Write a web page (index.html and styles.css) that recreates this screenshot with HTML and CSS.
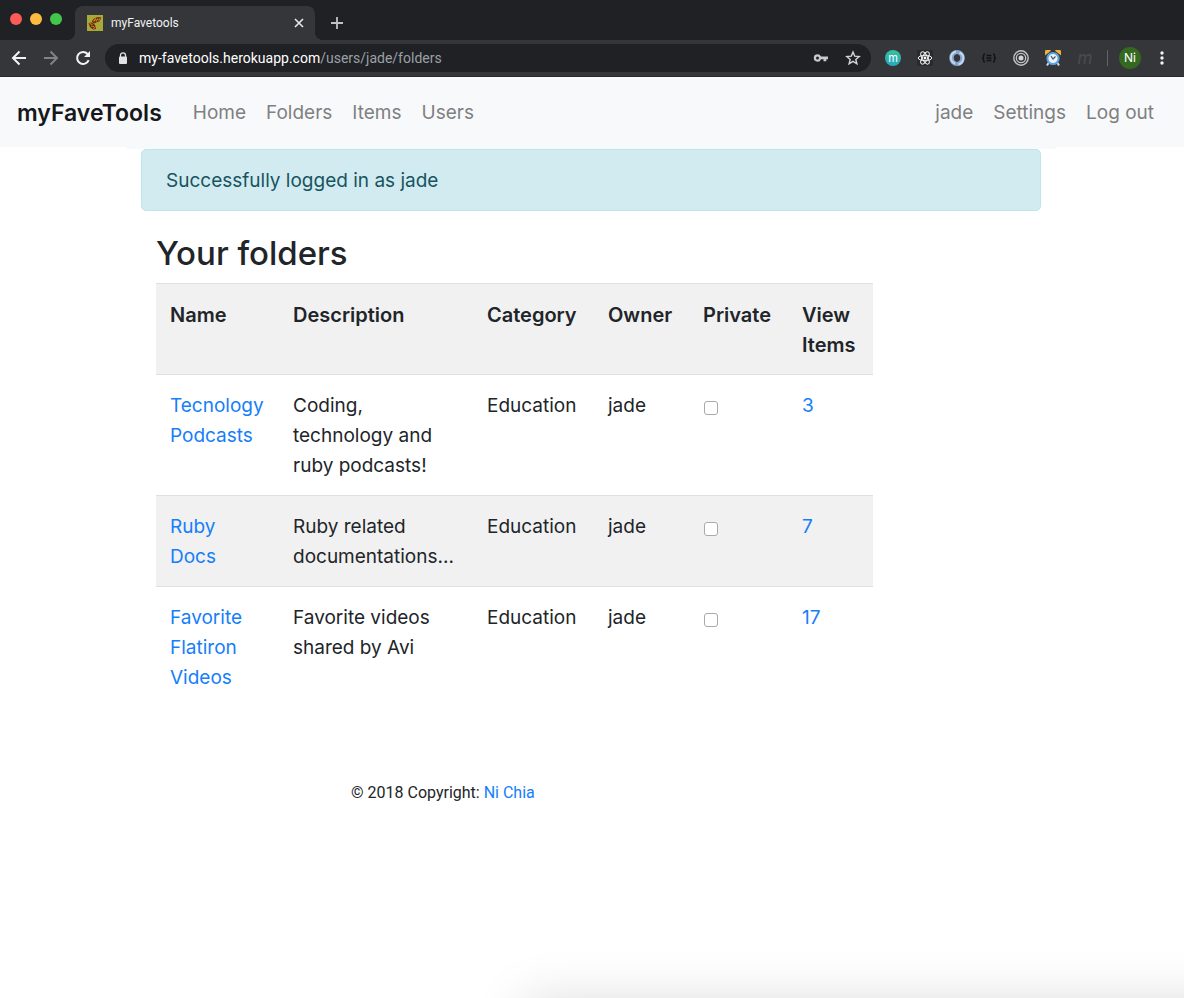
FILE: index.html
```
<!DOCTYPE html>
<html lang="en">
<head>
<meta charset="utf-8">
<meta name="viewport" content="width=device-width, initial-scale=1">
<title>myFavetools</title>
<link rel="stylesheet" href="styles.css">
</head>
<body>
<div class="window">
  <header class="chrome">
    <div class="tabstrip">
      <div class="lights">
        <button class="light red" aria-label="Close window"></button>
        <button class="light yellow" aria-label="Minimize window"></button>
        <button class="light green" aria-label="Zoom window"></button>
      </div>
      <div class="tab">
        <svg class="favicon" viewBox="0 0 16 16" aria-hidden="true">
          <rect width="16" height="16" fill="#a9a93a"/>
          <path d="M5 7C5.500 4 9 1.800 14 2.500L13.500 4.500L12 6.500L9 7.500L7 8.500Z" fill="#5a2a10"/>
          <path d="M1.500 8L5 7.500L8 10L9 14L6 14.500L3 12Z" fill="#5a2a10"/>
          <path d="M6.500 6.500L9 3.500M9 6.500L11 3.500M11.500 5.500L13 3.500M2.500 8.500L5.500 9.500M4 11L7 11.500M6 13.500L8 12.500" stroke="#ea7a20" stroke-width="1.200" fill="none"/>
        </svg>
        <span class="tab-title">myFavetools</span>
        <button class="icon-btn tab-close" aria-label="Close tab"><svg width="10" height="10" viewBox="0 0 10 10"><path d="M1 1L9 9M9 1L1 9" stroke="#e8eaed" stroke-width="1.600"/></svg></button>
      </div>
      <button class="icon-btn new-tab" aria-label="New tab"><svg width="12" height="12" viewBox="0 0 12 12"><path d="M6 0V12M0 6H12" stroke="#c0c2c5" stroke-width="1.800"/></svg></button>
    </div>
    <div class="toolbar">
      <button class="icon-btn" aria-label="Back"><svg width="16" height="16" viewBox="0 0 16 16"><path d="M15 8H2.500M8.500 1.500L2 8L8.500 14.500" stroke="#f1f3f4" stroke-width="2" fill="none"/></svg></button>
      <button class="icon-btn" aria-label="Forward"><svg width="16" height="16" viewBox="0 0 16 16"><path d="M1 8H13.500M7.500 1.500L14 8L7.500 14.500" stroke="#808286" stroke-width="2" fill="none"/></svg></button>
      <button class="icon-btn" aria-label="Reload"><svg width="16" height="16" viewBox="0 0 16 16"><path d="M13.700 10.200A6 6 0 1 1 12.600 4L14 5.500" stroke="#f1f3f4" stroke-width="2" fill="none"/><path d="M15 1V7H9Z" fill="#f1f3f4"/></svg></button>
      <div class="omnibox">
        <svg width="10" height="13" viewBox="0 0 10 13" aria-hidden="true"><path d="M2.500 5.500V3.300A2.500 2.500 0 0 1 7.500 3.300V5.500" stroke="#e0e2e5" stroke-width="1.300" fill="none"/><rect x="1" y="4.500" width="8" height="7.500" rx="1" fill="#e0e2e5"/></svg>
        <span class="url">my-favetools.herokuapp.com<span class="path">/users/jade/folders</span></span>
        <button class="icon-btn" aria-label="Passwords"><svg width="16" height="16" viewBox="0 0 16 16"><path d="M4.500 4.300A3.700 3.700 0 1 0 8 9.200H10.500V11.300H13.300V9.200H15V6.600H8A3.700 3.700 0 0 0 4.500 4.300ZM4.500 6.500A1.500 1.500 0 1 1 4.500 9.500A1.500 1.500 0 0 1 4.500 6.500Z" fill="#c8cacd" fill-rule="evenodd"/></svg></button>
        <button class="icon-btn" aria-label="Bookmark"><svg width="16" height="16" viewBox="0 0 16 16"><path d="M8 2L9.700 6.100L14.200 6.500L10.800 9.400L11.900 13.800L8 11.400L4.100 13.800L5.200 9.400L1.800 6.500L6.300 6.100Z" stroke="#d3d5d8" stroke-width="1.400" fill="none"/></svg></button>
      </div>
      <div class="extensions">
        <button class="icon-btn ext-m" aria-label="Extension m">m</button>
        <button class="icon-btn" aria-label="React tools"><svg width="16" height="16" viewBox="0 0 16 16"><rect width="16" height="16" rx="1" fill="#292a2d"/><g stroke="#f4f4f4" stroke-width="1" fill="none"><ellipse cx="8" cy="8" rx="6.800" ry="2.700"/><ellipse cx="8" cy="8" rx="6.800" ry="2.700" transform="rotate(60 8 8)"/><ellipse cx="8" cy="8" rx="6.800" ry="2.700" transform="rotate(120 8 8)"/></g><circle cx="8" cy="8" r="1.400" fill="#fff"/></svg></button>
        <button class="icon-btn" aria-label="JSON tools"><svg width="16" height="16" viewBox="0 0 16 16"><ellipse cx="8" cy="8" rx="5.500" ry="5.700" stroke="#84a5ce" stroke-width="4.600" fill="none"/><path d="M7 1.500C1 3 0 11 6 13.500M9.500 14.500C15.500 12.500 16 5 10.500 2.500" stroke="#c4d7ec" stroke-width="2" fill="none"/><ellipse cx="8" cy="8" rx="2.500" ry="3.700" fill="#35363a"/></svg></button>
        <button class="icon-btn" aria-label="Code formatter"><svg width="16" height="16" viewBox="0 0 16 16"><path d="M4 4Q2.500 4 2.500 5.500V7L1.500 8L2.500 9V10.500Q2.500 12 4 12M12 4Q13.500 4 13.500 5.500V7L14.500 8L13.500 9V10.500Q13.500 12 12 12M5.500 5.500H10.500M5.500 8H10.500M5.500 10.500H10.500" stroke="#121315" stroke-width="1.400" fill="none"/></svg></button>
        <button class="icon-btn" aria-label="Focus target"><svg width="16" height="16" viewBox="0 0 16 16"><g fill="none" stroke="#c4c4c4"><circle cx="8" cy="8" r="7.200" stroke-width="1.400"/><circle cx="8" cy="8" r="4.700" stroke-width="1.300"/></g><circle cx="8" cy="8" r="2.500" fill="#d4d4d4"/></svg></button>
        <button class="icon-btn" aria-label="Alarm clock"><svg width="16" height="16" viewBox="0 0 16 16"><path d="M3.500 13L2 15.500M12.500 13L14 15.500" stroke="#d1d9e1" stroke-width="2"/><path d="M0 5.500A3.600 3.600 0 0 1 6 .8ZM16 5.500A3.600 3.600 0 0 0 10 .8Z" fill="#edb13c"/><circle cx="8" cy="8.500" r="5.600" fill="#e9f3fb" stroke="#5ea2dc" stroke-width="2"/><path d="M6 6L8 9L10.500 6.500" stroke="#4a5968" stroke-width="1.200" fill="none"/></svg></button>
        <button class="icon-btn ext-script" aria-label="Extension">m</button>
      </div>
      <span class="divider"></span>
      <button class="icon-btn avatar" aria-label="Profile Ni">Ni</button>
      <button class="icon-btn menu" aria-label="Menu"><svg width="10" height="16" viewBox="0 0 10 16"><g fill="#f1f3f4"><circle cx="5" cy="3" r="1.700"/><circle cx="5" cy="8" r="1.700"/><circle cx="5" cy="13" r="1.700"/></g></svg></button>
    </div>
  </header>

  <nav class="navbar">
    <a class="brand" href="#">myFaveTools</a>
    <div class="links"><a href="#">Home</a><a href="#">Folders</a><a href="#">Items</a><a href="#">Users</a></div>
    <div class="links account"><a href="#">jade</a><a href="#">Settings</a><a href="#">Log out</a></div>
  </nav>

  <main class="page">
    <div class="notice"><div class="alert" role="status">Successfully logged in as jade</div></div>
    <section class="content">
      <h1>Your folders</h1>
      <table class="folders">
        <colgroup><col class="c-name"><col class="c-desc"><col class="c-cat"><col class="c-owner"><col class="c-private"><col class="c-view"></colgroup>
        <thead>
          <tr><th>Name</th><th>Description</th><th>Category</th><th>Owner</th><th>Private</th><th>View Items</th></tr>
        </thead>
        <tbody>
          <tr><td><a href="#">Tecnology Podcasts</a></td><td>Coding,<br>technology and ruby podcasts!</td><td>Education</td><td>jade</td><td><input type="checkbox" aria-label="Tecnology Podcasts private"></td><td><a href="#">3</a></td></tr>
          <tr><td><a href="#">Ruby<br>Docs</a></td><td>Ruby related documentations...</td><td>Education</td><td>jade</td><td><input type="checkbox" aria-label="Ruby Docs private"></td><td><a href="#">7</a></td></tr>
          <tr><td><a href="#">Favorite Flatiron Videos</a></td><td>Favorite videos shared by Avi</td><td>Education</td><td>jade</td><td><input type="checkbox" aria-label="Favorite Flatiron Videos private"></td><td><a href="#">17</a></td></tr>
        </tbody>
      </table>
      <footer class="footer">© 2018 Copyright: <a href="#">Ni Chia</a></footer>
    </section>
  </main>
  <div class="shade"></div>
</div>
</body>
</html>
```
FILE: styles.css
```
* { box-sizing: border-box; }
body {
  margin: 0;
  background: #fff;
  color: #212529;
  font: 19px/30px Inter, "Liberation Sans", sans-serif;
}
a { color: #157efb; text-decoration: none; }
svg { display: block; }

.window { position: relative; min-height: 100vh; overflow: hidden; }

/* browser frame */
.chrome { background: #202124; color: #f1f3f4; }
.tabstrip { display: flex; height: 40px; padding-top: 6px; }
.lights { display: flex; gap: 8px; width: 75px; padding: 7px 0 0 10px; }
.light { width: 12px; height: 12px; padding: 0; border: 0; border-radius: 50%; }
.red { background: #fc5b57; }
.yellow { background: #fdbc40; }
.green { background: #41c84b; }
.tab {
  position: relative;
  display: flex;
  align-items: center;
  width: 240px;
  padding: 0 11px 0 12px;
  border-radius: 8px 8px 0 0;
  background: #35363a;
}
.tab::before, .tab::after {
  content: "";
  position: absolute;
  bottom: 0;
  width: 8px;
  height: 8px;
}
.tab::before { right: 100%; background: radial-gradient(circle at 0 0, #202124 8px, #35363a 8px); }
.tab::after { left: 100%; background: radial-gradient(circle at 100% 0, #202124 8px, #35363a 8px); }
.favicon { width: 16px; height: 16px; }
.tab-title { flex: 1; padding-left: 8px; font: 12px/16px Roboto, sans-serif; }
.icon-btn {
  display: flex;
  flex: none;
  align-items: center;
  justify-content: center;
  padding: 0;
  border: 0;
  background: none;
  color: #fff;
}
.new-tab { padding-left: 16px; }
.toolbar {
  display: flex;
  align-items: center;
  gap: 16px;
  height: 37px;
  padding: 0 17px 0 11px;
  border-bottom: 1px solid #28292c;
  background: #35363a;
}
.omnibox {
  display: flex;
  flex: 1;
  align-items: center;
  gap: 16px;
  height: 28px;
  margin: 0 -2px;
  padding: 0 10px 0 13px;
  border-radius: 14px;
  background: #202124;
}
.url { flex: 1; margin-left: -5px; font: 14px/20px Roboto, sans-serif; color: #fff; }
.path { color: #9aa0a6; }
.extensions { display: flex; align-items: center; gap: 16px; }
.ext-m {
  width: 16px;
  height: 16px;
  border-radius: 50%;
  background: linear-gradient(#35c0a0, #27a9bb);
  font: 11px/14px Inter, sans-serif;
}
.ext-script { width: 16px; height: 16px; color: #4b4c50; font: italic 17px/16px Inter, sans-serif; }
.divider { width: 1px; height: 16px; margin: 0 -5px 0 -2px; background: #626367; }
.avatar {
  width: 22px;
  height: 22px;
  border-radius: 50%;
  background: #34691f;
  font: 12px/22px Inter, sans-serif;
}

/* site navigation */
.navbar {
  display: flex;
  align-items: center;
  min-height: 70px;
  padding: 2px 30px 0 17px;
  background: #f8f9fb;
}
.brand { margin-right: 31px; color: #16181b; font-size: 23px; font-weight: 600; }
.links { display: flex; gap: 20px; }
.links a { color: #7f8081; }
.account { margin-left: auto; }

/* page */
.page { max-width: 932px; margin: 0 auto; padding-right: 2px; }
.notice { padding: 2px 15px 0; background: linear-gradient(#f8f9fb 2px, #fff 2px); }
.alert {
  padding: 16px 24px 14px;
  border: 1px solid #bee5eb;
  border-radius: 5px;
  background: #d2ebf0;
  color: #17545f;
}
.content { padding: 21px 30px 0; }
h1 { margin: 0 0 9px; font-size: 33px; line-height: 42px; font-weight: 500; }
.folders { width: 717px; max-width: 100%; table-layout: fixed; border-spacing: 0; }
.c-name { width: 123px; }
.c-desc { width: 194px; }
.c-cat { width: 121px; }
.c-owner { width: 95px; }
.c-private { width: 99px; }
.c-view { width: 85px; }
.folders th, .folders td {
  padding: 16px 0 14px 14px;
  border-top: 1px solid #dee0e4;
  text-align: left;
  vertical-align: top;
}
.folders th { font-size: 20px; font-weight: 600; }
.folders thead tr, .folders tbody tr:nth-child(even) { background: #f1f1f1; }
.folders input {
  appearance: none;
  display: block;
  width: 14px;
  height: 14px;
  margin: 10px 0 0 1px;
  border: 1px solid #aaa;
  border-radius: 3px;
  background: #fff;
}
.footer { padding: 71px 0 0 195px; font-family: Roboto, sans-serif; font-size: 16px; }

.shade {
  position: absolute;
  top: 100%;
  left: 524px;
  right: -100px;
  height: 200px;
  box-shadow: 0 4px 50px rgba(0, 0, 0, 0.15);
}
```
